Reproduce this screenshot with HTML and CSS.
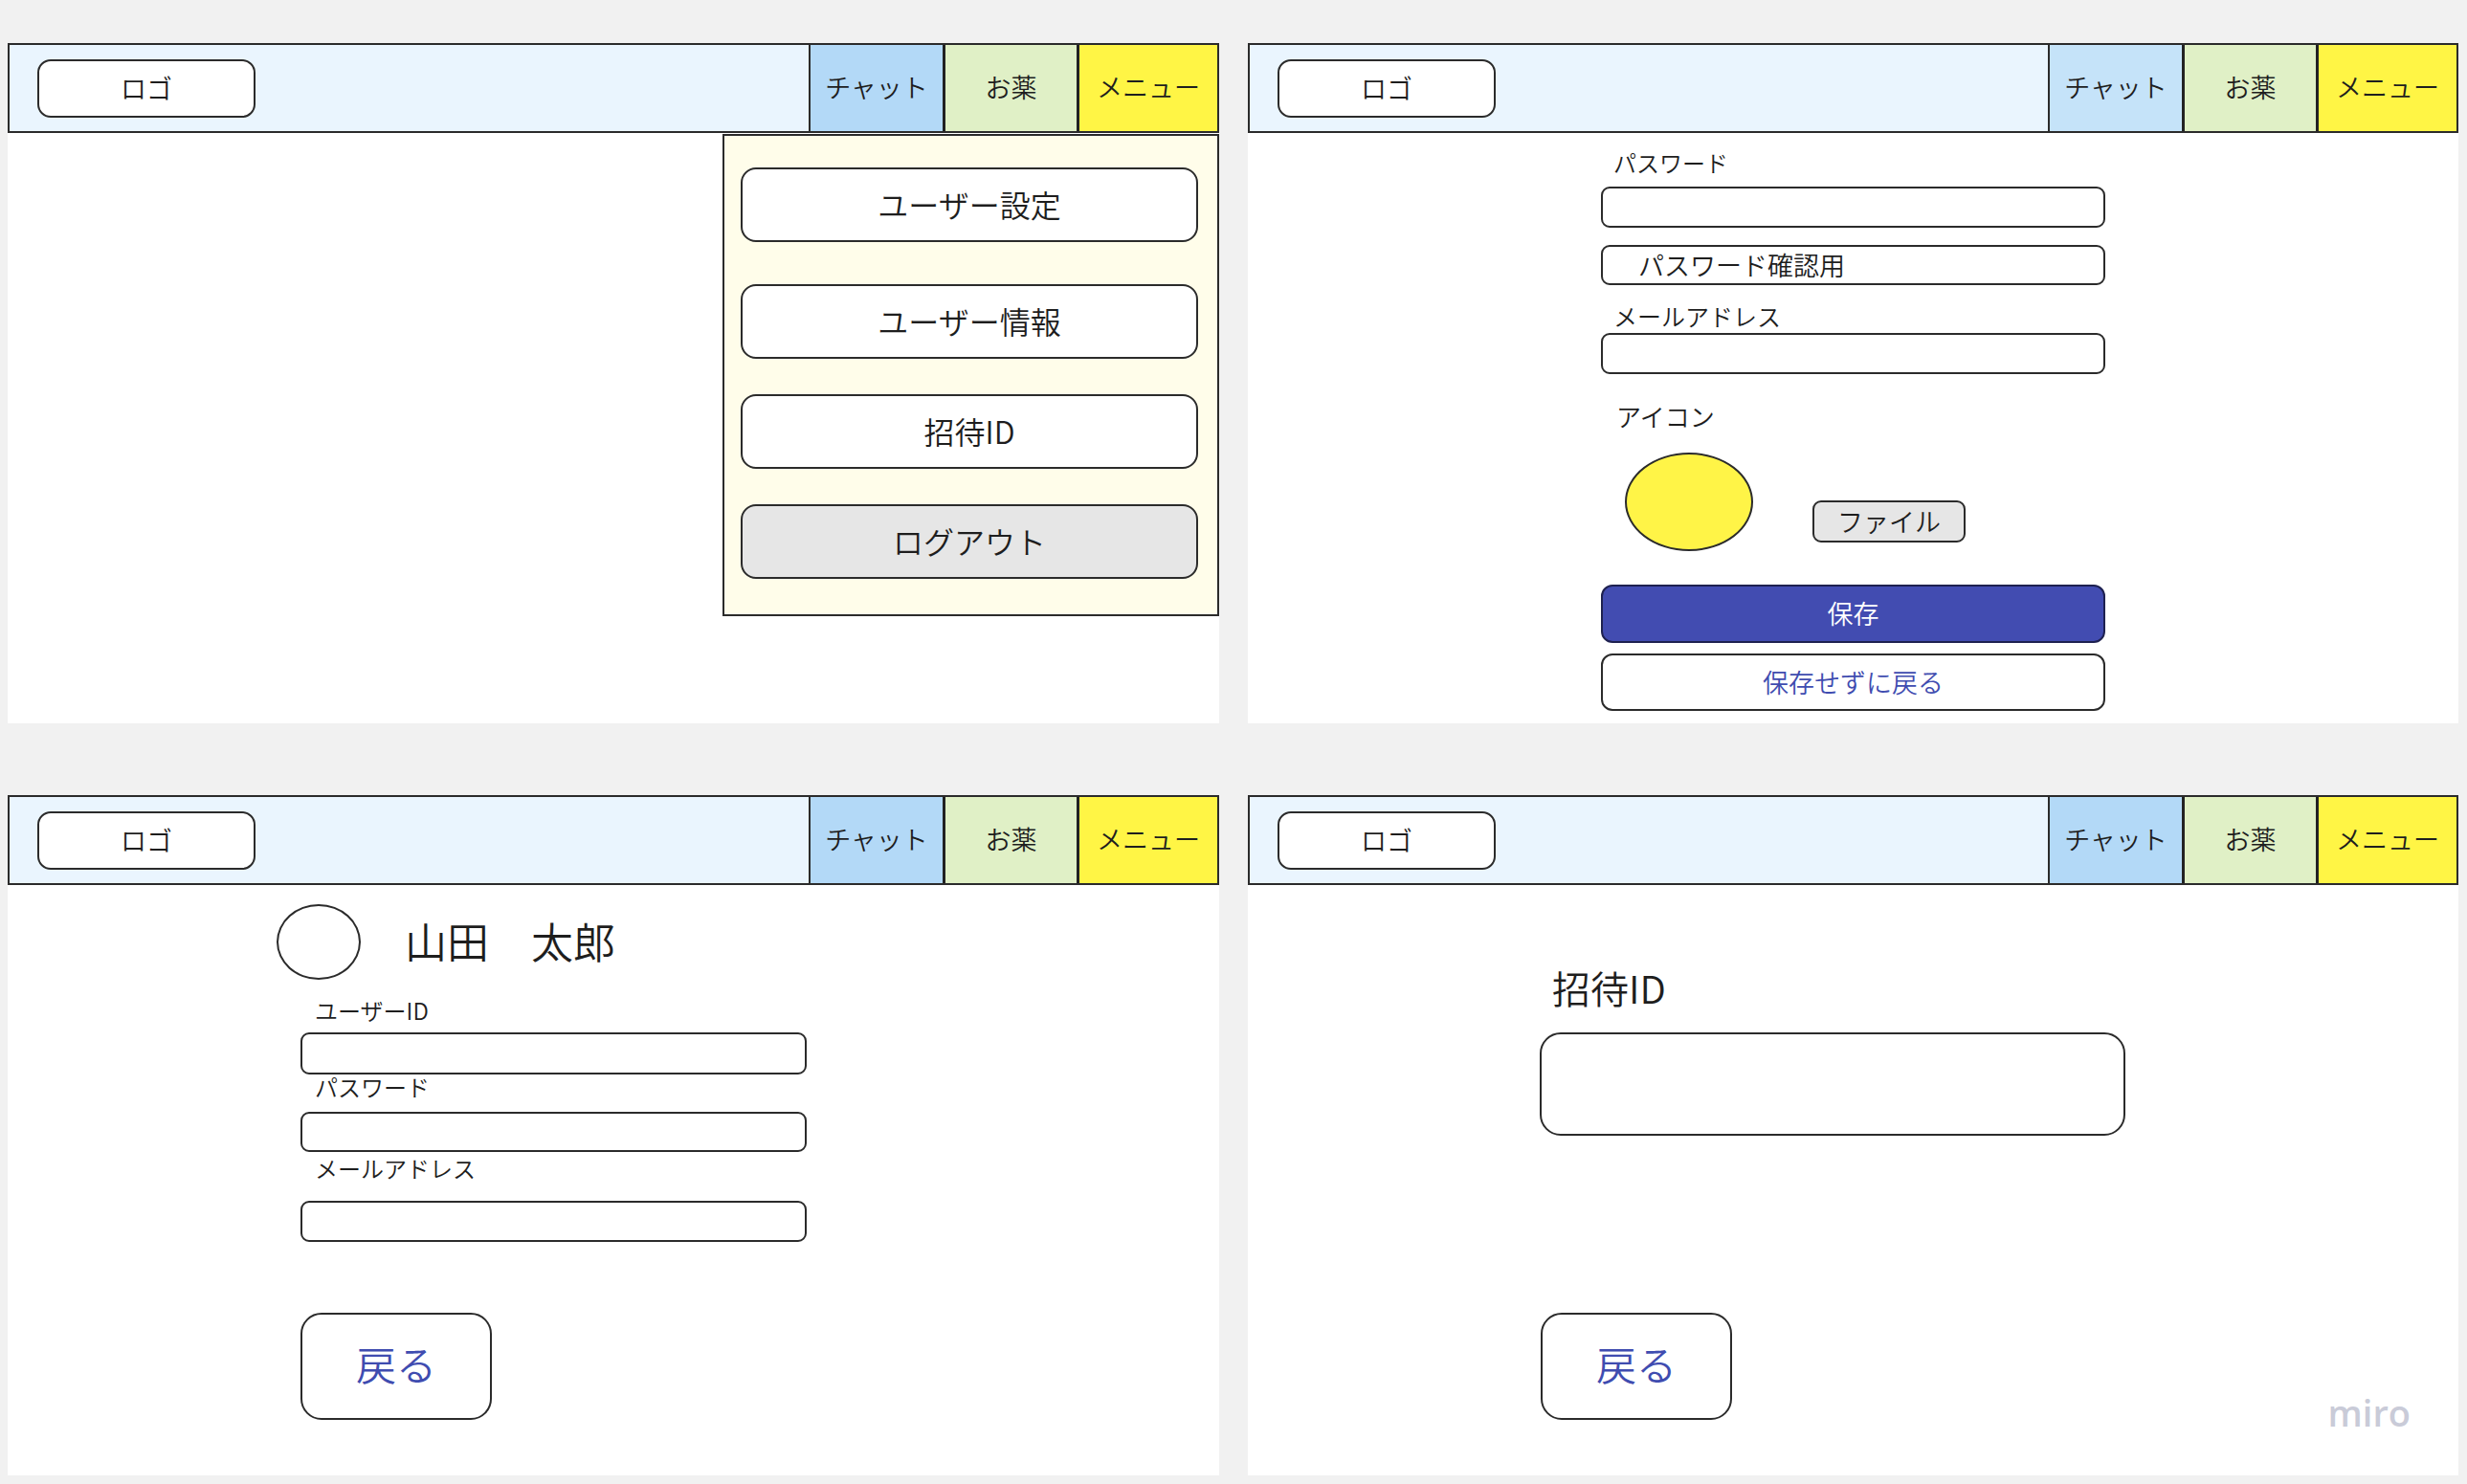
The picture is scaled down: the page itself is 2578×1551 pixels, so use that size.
FILE: index.html
```html
<!DOCTYPE html>
<html lang="ja">
<head>
<meta charset="utf-8">
<title>画面設計</title>
<link rel="stylesheet" href="styles.css">
</head>
<body>
<main class="board">

  <section class="panel">
    <header class="appbar">
      <div class="logo">ロゴ</div>
      <nav class="tabs">
        <div class="tab tab-chat">チャット</div>
        <div class="tab tab-med">お薬</div>
        <div class="tab tab-menu">メニュー</div>
      </nav>
    </header>
    <div class="dropdown">
      <div class="menu-btn menu-btn-first">ユーザー設定</div>
      <div class="menu-btn">ユーザー情報</div>
      <div class="menu-btn">招待ID</div>
      <div class="menu-btn menu-btn-gray">ログアウト</div>
    </div>
  </section>

  <section class="panel">
    <header class="appbar">
      <div class="logo">ロゴ</div>
      <nav class="tabs">
        <div class="tab tab-chat tab-chat-light">チャット</div>
        <div class="tab tab-med">お薬</div>
        <div class="tab tab-menu">メニュー</div>
      </nav>
    </header>
    <div class="settings">
      <div class="s-label s-label-pw">パスワード</div>
      <div class="field s-input1"></div>
      <div class="field s-input2">パスワード確認用</div>
      <div class="s-label s-label-mail">メールアドレス</div>
      <div class="field s-input3"></div>
      <div class="s-label s-label-icon">アイコン</div>
      <div class="icon-row">
        <div class="icon-yellow"></div>
        <div class="file-btn">ファイル</div>
      </div>
      <div class="save-btn">保存</div>
      <div class="back-wide">保存せずに戻る</div>
    </div>
  </section>

  <section class="panel">
    <header class="appbar">
      <div class="logo">ロゴ</div>
      <nav class="tabs">
        <div class="tab tab-chat">チャット</div>
        <div class="tab tab-med">お薬</div>
        <div class="tab tab-menu">メニュー</div>
      </nav>
    </header>
    <div class="profile">
      <div class="avatar"></div>
      <div class="name">山田　太郎</div>
    </div>
    <div class="info">
      <div class="i-label i-label-id">ユーザーID</div>
      <div class="field i-input1"></div>
      <div class="i-label i-label-pw">パスワード</div>
      <div class="field i-input2"></div>
      <div class="i-label i-label-mail">メールアドレス</div>
      <div class="field i-input3"></div>
      <div class="back-btn i-back">戻る</div>
    </div>
  </section>

  <section class="panel">
    <header class="appbar">
      <div class="logo">ロゴ</div>
      <nav class="tabs">
        <div class="tab tab-chat">チャット</div>
        <div class="tab tab-med">お薬</div>
        <div class="tab tab-menu">メニュー</div>
      </nav>
    </header>
    <div class="invite">
      <div class="invite-title">招待ID</div>
      <div class="invite-box"></div>
      <div class="back-btn invite-back">戻る</div>
    </div>
    <div class="miro">miro</div>
  </section>

</main>
</body>
</html>
```

FILE: styles.css
```css
* { box-sizing: border-box; }

html, body {
  margin: 0;
  padding: 0;
  background: #f1f1f1;
}

body {
  font-family: "Noto Sans CJK JP", "Noto Sans", sans-serif;
  font-weight: 350;
  color: #1e1e1e;
}

.board {
  display: grid;
  grid-template-columns: 1266px 1265px;
  grid-template-rows: 711px 711px;
  column-gap: 30px;
  row-gap: 75px;
  padding: 45px 0 0 8px;
  width: 2578px;
  height: 1551px;
}

.panel {
  position: relative;
  background: #ffffff;
  display: flex;
  flex-direction: column;
}

/* ---------- app bar ---------- */
.appbar {
  height: 94px;
  flex: none;
  border: 2px solid #2b2b2b;
  background: #eaf5fe;
  display: flex;
  align-items: center;
}

.logo {
  margin-left: 29px;
  width: 228px;
  height: 61px;
  border: 2px solid #2b2b2b;
  border-radius: 14px;
  background: #ffffff;
  display: flex;
  align-items: center;
  justify-content: center;
  padding-bottom: 2px;
  font-size: 27px;
  line-height: 1;
}

.tabs {
  margin-left: auto;
  align-self: stretch;
  display: flex;
}

.tab {
  display: flex;
  align-items: center;
  justify-content: center;
  padding-bottom: 3px;
  font-size: 27px;
  line-height: 1;
}

.tab-chat {
  width: 140px;
  border-left: 2px solid #2b2b2b;
  background: #b3d9f7;
}

.tab-chat-light { background: #c5e3f9; }

.tab-med {
  width: 140px;
  border-left: 3px solid #222222;
  background: #e0f0c6;
}

.tab-menu {
  width: 147px;
  border-left: 3px solid #222222;
  background: #fff545;
}

/* ---------- dropdown menu ---------- */
.dropdown {
  position: absolute;
  top: 95px;
  right: 0;
  width: 519px;
  height: 504px;
  border: 2px solid #2b2b2b;
  background: #fffdea;
  padding: 33px 0 0 17px;
  display: flex;
  flex-direction: column;
  gap: 37px;
}

.menu-btn {
  width: 478px;
  height: 78px;
  border: 2px solid #2b2b2b;
  border-radius: 16px;
  background: #ffffff;
  display: flex;
  align-items: center;
  justify-content: center;
  padding-bottom: 3px;
  font-size: 32px;
  line-height: 1;
}

.menu-btn-first { margin-bottom: 7px; }
.menu-btn-gray { background: #e6e6e6; }

/* ---------- generic field ---------- */
.field {
  border: 2px solid #2b2b2b;
  border-radius: 9px;
  background: #ffffff;
}

/* ---------- settings form ---------- */
.settings {
  margin-left: 369px;
  width: 527px;
  display: flex;
  flex-direction: column;
}

.s-label {
  height: 30px;
  line-height: 26px;
  padding-left: 13px;
  font-size: 24px;
}

.s-label-pw { margin-top: 18px; }
.s-input1 { margin-top: 8px; height: 43px; }
.s-input2 {
  margin-top: 18px;
  height: 42px;
  padding-left: 37px;
  padding-bottom: 2px;
  display: flex;
  align-items: center;
  font-size: 27px;
  line-height: 1;
}
.s-label-mail { margin-top: 19px; font-size: 25px; }
.s-input3 { margin-top: 1px; height: 43px; }
.s-label-icon { margin-top: 32px; font-size: 26px; padding-left: 16px; line-height: 24px; }

.icon-row {
  margin-top: 20px;
  height: 103px;
  display: flex;
  align-items: flex-start;
}

.icon-yellow {
  margin-left: 25px;
  width: 134px;
  height: 103px;
  border: 2px solid #2b2b2b;
  border-radius: 50%;
  background: #fff447;
}

.file-btn {
  margin-left: 62px;
  margin-top: 50px;
  width: 160px;
  height: 44px;
  border: 2px solid #2b2b2b;
  border-radius: 9px;
  background: #e6e6e6;
  display: flex;
  align-items: center;
  justify-content: center;
  padding-bottom: 2px;
  font-size: 27px;
  line-height: 1;
}

.save-btn {
  margin-top: 35px;
  height: 61px;
  border: 2px solid #1e2150;
  border-radius: 12px;
  background: #424cb1;
  color: #ffffff;
  display: flex;
  align-items: center;
  justify-content: center;
  padding-bottom: 2px;
  font-size: 27px;
  line-height: 1;
}

.back-wide {
  margin-top: 11px;
  height: 60px;
  border: 2px solid #2b2b2b;
  border-radius: 12px;
  background: #ffffff;
  color: #3f4cb0;
  display: flex;
  align-items: center;
  justify-content: center;
  padding-bottom: 2px;
  font-size: 27px;
  line-height: 1;
}

/* ---------- user info ---------- */
.profile {
  margin-top: 20px;
  margin-left: 281px;
  display: flex;
  align-items: center;
  gap: 46px;
}

.avatar {
  width: 88px;
  height: 79px;
  border: 2px solid #2b2b2b;
  border-radius: 50%;
  background: #ffffff;
}

.name {
  font-size: 44px;
  line-height: 1;
  margin-top: -4px;
}

.info {
  margin-left: 306px;
  width: 529px;
  display: flex;
  flex-direction: column;
}

.i-label {
  height: 30px;
  line-height: 24px;
  padding-left: 15px;
  font-size: 24px;
}

.i-label-id { margin-top: 20px; }
.i-input1 { margin-top: 5px; height: 44px; }
.i-label-pw { margin-top: 1px; }
.i-input2 { margin-top: 8px; height: 42px; }
.i-label-mail { margin-top: 5px; }
.i-input3 { margin-top: 16px; height: 43px; }

.back-btn {
  width: 200px;
  height: 112px;
  border: 2px solid #2b2b2b;
  border-radius: 22px;
  background: #ffffff;
  color: #3f4cb0;
  display: flex;
  align-items: center;
  justify-content: center;
  padding-bottom: 7px;
  font-size: 42px;
  line-height: 1;
}

.i-back { margin-top: 74px; }

/* ---------- invite ---------- */
.invite {
  display: flex;
  flex-direction: column;
}

.invite-title {
  margin-top: 85px;
  margin-left: 318px;
  height: 49px;
  line-height: 45px;
  font-size: 40px;
}

.invite-box {
  margin-top: 20px;
  margin-left: 305px;
  width: 612px;
  height: 108px;
  border: 2px solid #2b2b2b;
  border-radius: 22px;
  background: #ffffff;
}

.invite-back {
  margin-top: 185px;
  margin-left: 306px;
}

.miro {
  position: absolute;
  right: 50px;
  bottom: 47px;
  font-family: "Open Sans", "Noto Sans", sans-serif;
  font-size: 38px;
  line-height: 38px;
  font-weight: 600;
  color: #c9cbd8;
}
```
